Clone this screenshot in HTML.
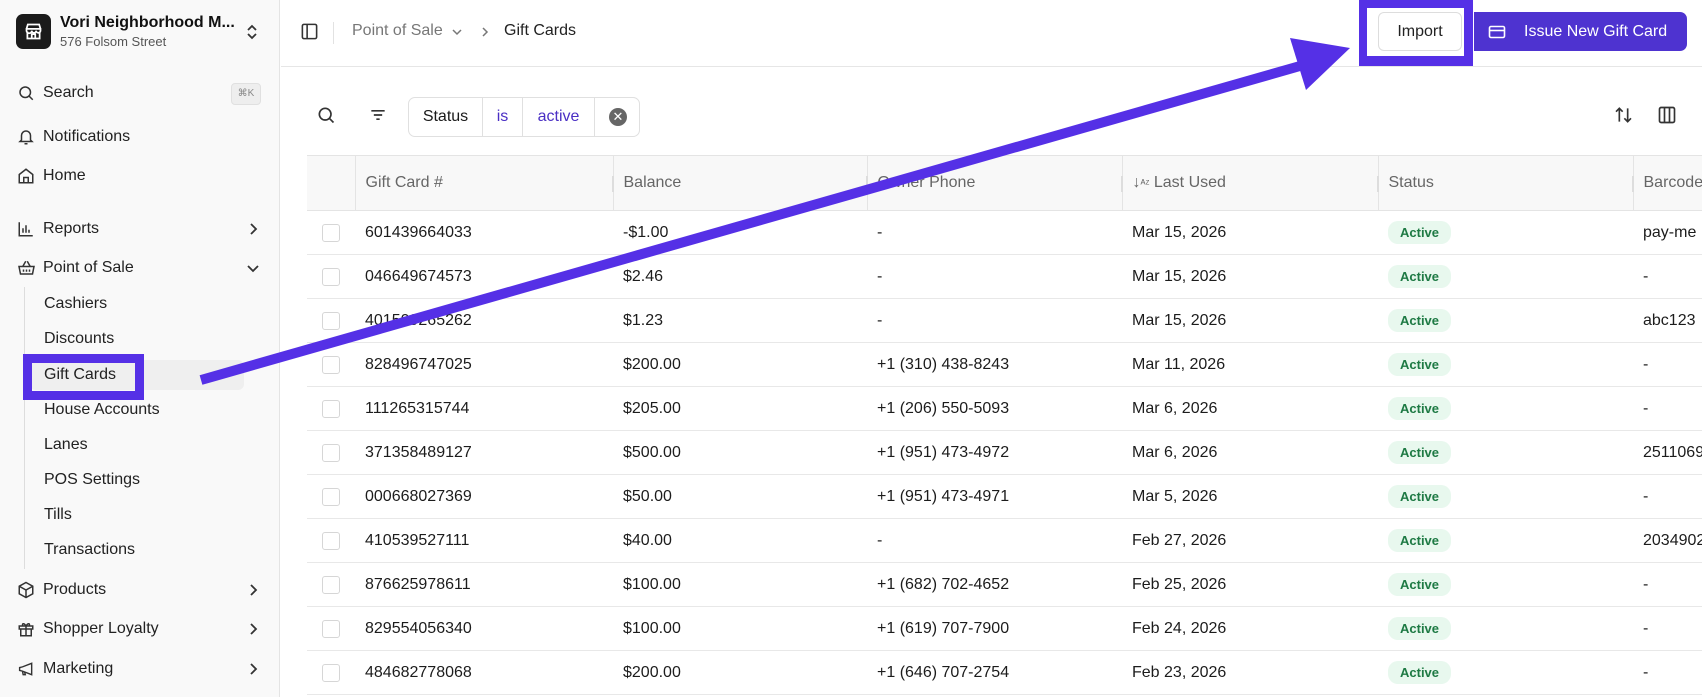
<!DOCTYPE html>
<html><head><meta charset="utf-8"><style>
*{box-sizing:border-box;margin:0;padding:0}
body{width:1702px;height:697px;overflow:hidden;background:#fff;font-family:"Liberation Sans",sans-serif;color:#1a1a1a;position:relative}
.sb{position:absolute;left:0;top:0;width:280px;height:697px;background:#f9f9f9;border-right:1px solid #e4e4e4}
.abs{position:absolute}
.nav{position:absolute;left:43px;font-size:16px;color:#222;transform:translateY(-50%)}
.ic{position:absolute;left:17px;transform:translateY(-50%)}
.chev{position:absolute;left:246px;transform:translateY(-50%)}
.sub{position:absolute;left:44px;font-size:16px;color:#222;transform:translateY(-50%)}
.hdr{position:absolute;left:281px;top:0;right:0;height:67px;border-bottom:1px solid #e6e6e6}
table{position:absolute;left:307px;top:155px;width:1426px;border-collapse:collapse;font-size:16px;table-layout:fixed}
th{height:55px;background:#f8f8f8;color:#666;font-weight:normal;text-align:left;padding-left:10px;border-top:1px solid #e4e4e4;border-bottom:1px solid #e4e4e4;border-left:1px solid #e4e4e4;position:relative;white-space:nowrap}
th:first-child{border-left:none}
td{height:44px;border-bottom:1px solid #e8e8e8;padding-left:10px;color:#1c1c1c;white-space:nowrap}
.cb{width:18px;height:18px;border:1px solid #d6d6d6;border-radius:3px;background:#fff;margin-left:5px}
.badge{display:inline-block;background:#e8f8ee;color:#1e7a44;font-weight:bold;font-size:13px;padding:4px 12px;border-radius:10px}
.rs{position:absolute;right:-2px;top:20px;width:3px;height:16px;background:#ddd}
</style></head><body>
<div class="sb">
 <div class="abs" style="left:16px;top:14px;width:35px;height:35px;background:#1b1b1b;border-radius:7px"></div>
 <svg class="abs" style="left:23px;top:21px" width="21" height="21" viewBox="0 0 24 24" fill="none" stroke="#fff" stroke-width="2"><path d="M4 9l1.5-5h13L20 9M4 9h16v2a2.5 2.5 0 0 1-5 0 2.5 2.5 0 0 1-5 0 2.5 2.5 0 0 1-6 0zM5 12v8h14v-8M10 20v-5h4v5"/></svg>
 <div class="abs" style="left:60px;top:14px;font-size:16px;font-weight:bold;color:#111">Vori Neighborhood M...</div>
 <div class="abs" style="left:60px;top:34px;font-size:13px;color:#555">576 Folsom Street</div>
 <svg class="abs" style="left:245px;top:23px" width="14" height="18" viewBox="0 0 14 18" fill="none" stroke="#333" stroke-width="1.8"><path d="M3 7l4-4 4 4M3 11l4 4 4-4"/></svg>

 <svg class="ic" style="top:93px" width="18" height="18" viewBox="0 0 24 24" fill="none" stroke="#333" stroke-width="2"><circle cx="11" cy="11" r="7"/><path d="M16 16l5 5"/></svg>
 <div class="nav" style="top:93px">Search</div>
 <div class="abs" style="left:231px;top:83px;width:30px;height:22px;border:1px solid #e0e0e0;background:#eee;border-radius:4px;font-size:10px;color:#888;text-align:center;line-height:20px">⌘K</div>
 <svg class="ic" style="top:137px" width="18" height="19" viewBox="0 0 24 24" fill="none" stroke="#333" stroke-width="2"><path d="M6 16V10a6 6 0 0 1 12 0v6l2 2H4zM10 21h4"/></svg>
 <div class="nav" style="top:137px">Notifications</div>
 <svg class="ic" style="top:176px" width="18" height="19" viewBox="0 0 24 24" fill="none" stroke="#333" stroke-width="2"><path d="M3 10l9-7 9 7v11H3zM9 21v-7h6v7"/></svg>
 <div class="nav" style="top:176px">Home</div>
 <svg class="ic" style="top:229px" width="18" height="18" viewBox="0 0 24 24" fill="none" stroke="#333" stroke-width="2"><path d="M3 3v18h18M8 17v-6M12 17V7M16 17v-4"/></svg>
 <div class="nav" style="top:229px">Reports</div>
 <svg class="chev" style="top:229px" width="14" height="14" viewBox="0 0 14 14" fill="none" stroke="#333" stroke-width="1.8"><path d="M5 2l5 5-5 5"/></svg>
 <svg class="ic" style="top:268px" width="19" height="18" viewBox="0 0 24 24" fill="none" stroke="#333" stroke-width="2"><path d="M2 10h20l-2 10H4zM7 10l4-7M17 10l-4-7M8 14v3M12 14v3M16 14v3"/></svg>
 <div class="nav" style="top:268px">Point of Sale</div>
 <svg class="chev" style="top:268px" width="14" height="14" viewBox="0 0 14 14" fill="none" stroke="#333" stroke-width="1.8"><path d="M2 5l5 5 5-5"/></svg>
 <div class="abs" style="left:24px;top:287px;width:1px;height:282px;background:#ddd"></div>
 <div class="abs" style="left:30px;top:360px;width:214px;height:30px;background:#efefef;border-radius:6px"></div>
 <div class="sub" style="top:304px">Cashiers</div>
 <div class="sub" style="top:339px">Discounts</div>
 <div class="sub" style="top:375px">Gift Cards</div>
 <div class="sub" style="top:410px">House Accounts</div>
 <div class="sub" style="top:445px">Lanes</div>
 <div class="sub" style="top:480px">POS Settings</div>
 <div class="sub" style="top:515px">Tills</div>
 <div class="sub" style="top:550px">Transactions</div>
 <svg class="ic" style="top:590px" width="18" height="18" viewBox="0 0 24 24" fill="none" stroke="#333" stroke-width="2"><path d="M12 2l9 5v10l-9 5-9-5V7zM3 7l9 5 9-5M12 12v10"/></svg>
 <div class="nav" style="top:590px">Products</div>
 <svg class="chev" style="top:590px" width="14" height="14" viewBox="0 0 14 14" fill="none" stroke="#333" stroke-width="1.8"><path d="M5 2l5 5-5 5"/></svg>
 <svg class="ic" style="top:629px" width="18" height="18" viewBox="0 0 24 24" fill="none" stroke="#333" stroke-width="2"><path d="M3 8h18v4H3zM5 12v9h14v-9M12 8v13M12 8C9 3 6 5 8 8M12 8c3-5 6-3 4 0"/></svg>
 <div class="nav" style="top:629px">Shopper Loyalty</div>
 <svg class="chev" style="top:629px" width="14" height="14" viewBox="0 0 14 14" fill="none" stroke="#333" stroke-width="1.8"><path d="M5 2l5 5-5 5"/></svg>
 <svg class="ic" style="top:669px" width="18" height="17" viewBox="0 0 24 24" fill="none" stroke="#333" stroke-width="2"><path d="M3 10v4l4 1 13 5V4L7 9zM7 15l1 5h3l-1-4"/></svg>
 <div class="nav" style="top:669px">Marketing</div>
 <svg class="chev" style="top:669px" width="14" height="14" viewBox="0 0 14 14" fill="none" stroke="#333" stroke-width="1.8"><path d="M5 2l5 5-5 5"/></svg>
</div>

<div class="hdr"></div>
<svg class="abs" style="left:300px;top:22px" width="19" height="19" viewBox="0 0 24 24" fill="none" stroke="#333" stroke-width="2"><rect x="3" y="3" width="18" height="18" rx="2"/><path d="M9 3v18"/></svg>
<div class="abs" style="left:333px;top:22px;width:1px;height:22px;background:#e2e2e2"></div>
<div class="abs" style="left:352px;top:22px;font-size:16px;color:#777">Point of Sale</div>
<svg class="abs" style="left:451px;top:26px" width="12" height="12" viewBox="0 0 12 12" fill="none" stroke="#777" stroke-width="1.5"><path d="M2 4l4 4 4-4"/></svg>
<svg class="abs" style="left:480px;top:26px" width="10" height="12" viewBox="0 0 10 12" fill="none" stroke="#777" stroke-width="1.5"><path d="M3 2l4 4-4 4"/></svg>
<div class="abs" style="left:504px;top:22px;font-size:16px;color:#222">Gift Cards</div>

<div class="abs" style="left:1359px;top:0;width:114px;height:66px;background:#5530e6"></div>
<div class="abs" style="left:1367px;top:8px;width:97px;height:48px;background:#fff"></div>
<div class="abs" style="left:1378px;top:12px;width:84px;height:39px;border:1px solid #ddd;border-radius:6px;background:#fff;font-size:16px;text-align:center;line-height:37px;color:#222">Import</div>
<div class="abs" style="left:1474px;top:12px;width:213px;height:39px;background:#4e33d0;border-radius:0 7px 7px 0;color:#fff;font-size:16px;line-height:39px;padding-left:50px">Issue New Gift Card</div>
<svg class="abs" style="left:1488px;top:24px" width="18" height="16" viewBox="0 0 18 16" fill="none" stroke="#fff" stroke-width="1.6"><rect x="1.5" y="2.5" width="15" height="11" rx="1.5"/><path d="M1.5 6.5h15"/></svg>

<svg class="abs" style="left:316px;top:105px" width="20" height="20" viewBox="0 0 24 24" fill="none" stroke="#333" stroke-width="2"><circle cx="11" cy="11" r="7"/><path d="M16 16l5 5"/></svg>
<svg class="abs" style="left:368px;top:105px" width="20" height="20" viewBox="0 0 24 24" fill="none" stroke="#333" stroke-width="2"><path d="M4 7h16M7 12h10M10 17h4"/></svg>
<div class="abs" style="left:408px;top:97px;width:232px;height:40px;border:1px solid #e0e0e0;border-radius:7px;display:flex;font-size:16px;line-height:38px">
 <div style="width:74px;text-align:center;border-right:1px solid #e0e0e0">Status</div>
 <div style="width:40px;text-align:center;border-right:1px solid #e0e0e0;color:#4a2fc4">is</div>
 <div style="width:72px;text-align:center;border-right:1px solid #e0e0e0;color:#4a2fc4">active</div>
 <div style="flex:1;position:relative"><div style="position:absolute;left:14px;top:10px;width:18px;height:18px;border-radius:50%;background:#666;color:#fff;font-size:13px;line-height:18px;text-align:center">✕</div></div>
</div>
<svg class="abs" style="left:1613px;top:105px" width="21" height="20" viewBox="0 0 24 24" fill="none" stroke="#333" stroke-width="2"><path d="M7 20V4M3 8l4-4 4 4M17 4v16M13 16l4 4 4-4"/></svg>
<svg class="abs" style="left:1657px;top:105px" width="20" height="20" viewBox="0 0 24 24" fill="none" stroke="#333" stroke-width="2"><rect x="3" y="3" width="18" height="18" rx="2"/><path d="M9 3v18M15 3v18"/></svg>

<table>
<colgroup><col style="width:48px"><col style="width:258px"><col style="width:254px"><col style="width:255px"><col style="width:256px"><col style="width:255px"><col style="width:100px"></colgroup>
<tr><th></th><th>Gift Card #<span class="rs"></span></th><th>Balance<span class="rs"></span></th><th>Owner Phone<span class="rs"></span></th><th>↓<span style="font-size:11px">ᴬᶻ</span> Last Used<span class="rs"></span></th><th>Status<span class="rs"></span></th><th>Barcode</th></tr>
<tr><td><div class="cb"></div></td><td>601439664033</td><td>-$1.00</td><td>-</td><td>Mar 15, 2026</td><td><span class="badge">Active</span></td><td>pay-me</td></tr>
<tr><td><div class="cb"></div></td><td>046649674573</td><td>$2.46</td><td>-</td><td>Mar 15, 2026</td><td><span class="badge">Active</span></td><td>-</td></tr>
<tr><td><div class="cb"></div></td><td>401509265262</td><td>$1.23</td><td>-</td><td>Mar 15, 2026</td><td><span class="badge">Active</span></td><td>abc123</td></tr>
<tr><td><div class="cb"></div></td><td>828496747025</td><td>$200.00</td><td>+1 (310) 438-8243</td><td>Mar 11, 2026</td><td><span class="badge">Active</span></td><td>-</td></tr>
<tr><td><div class="cb"></div></td><td>111265315744</td><td>$205.00</td><td>+1 (206) 550-5093</td><td>Mar 6, 2026</td><td><span class="badge">Active</span></td><td>-</td></tr>
<tr><td><div class="cb"></div></td><td>371358489127</td><td>$500.00</td><td>+1 (951) 473-4972</td><td>Mar 6, 2026</td><td><span class="badge">Active</span></td><td>2511069</td></tr>
<tr><td><div class="cb"></div></td><td>000668027369</td><td>$50.00</td><td>+1 (951) 473-4971</td><td>Mar 5, 2026</td><td><span class="badge">Active</span></td><td>-</td></tr>
<tr><td><div class="cb"></div></td><td>410539527111</td><td>$40.00</td><td>-</td><td>Feb 27, 2026</td><td><span class="badge">Active</span></td><td>2034902</td></tr>
<tr><td><div class="cb"></div></td><td>876625978611</td><td>$100.00</td><td>+1 (682) 702-4652</td><td>Feb 25, 2026</td><td><span class="badge">Active</span></td><td>-</td></tr>
<tr><td><div class="cb"></div></td><td>829554056340</td><td>$100.00</td><td>+1 (619) 707-7900</td><td>Feb 24, 2026</td><td><span class="badge">Active</span></td><td>-</td></tr>
<tr><td><div class="cb"></div></td><td>484682778068</td><td>$200.00</td><td>+1 (646) 707-2754</td><td>Feb 23, 2026</td><td><span class="badge">Active</span></td><td>-</td></tr>
</table>

<div class="abs" style="left:23px;top:354px;width:121px;height:46px;border:9px solid #5530e6"></div>
<svg class="abs" style="left:0;top:0" width="1702" height="697" viewBox="0 0 1702 697">
 <path d="M201 380L1300 66" stroke="#5530e6" stroke-width="10"/>
 <path d="M1350 48L1290 38L1306 90Z" fill="#5530e6"/>
</svg>
</body></html>
